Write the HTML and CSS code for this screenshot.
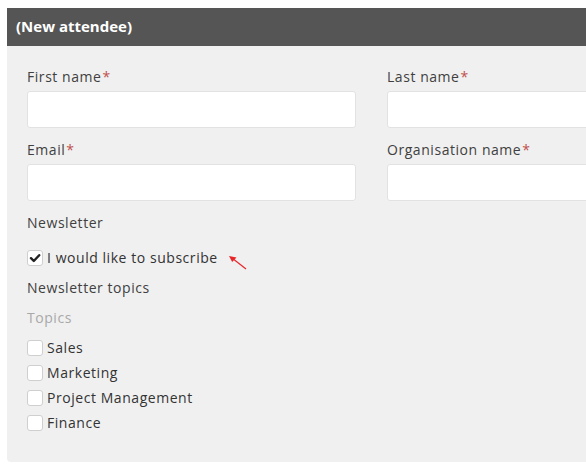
FILE: index.html
```html
<!DOCTYPE html>
<html>
<head>
<meta charset="utf-8">
<link rel="stylesheet" href="styles.css">
</head>
<body>
<div class="page">
  <div class="panel">
    <div class="panel-head">(New attendee)</div>
    <div class="panel-body">
      <div class="grid">
        <div class="field">
          <label class="label">First name<span class="req">*</span></label>
          <div class="input"></div>
        </div>
        <div class="field">
          <label class="label">Last name<span class="req">*</span></label>
          <div class="input"></div>
        </div>
        <div class="field">
          <label class="label">Email<span class="req">*</span></label>
          <div class="input"></div>
        </div>
        <div class="field">
          <label class="label">Organisation name<span class="req">*</span></label>
          <div class="input"></div>
        </div>
      </div>
      <div class="label newsletter">Newsletter</div>
      <div class="check-row subscribe">
        <span class="box checked"><svg viewBox="0 0 16 16" width="16" height="16"><path d="M4 8.2 L6.8 11 L12.2 5.2" fill="none" stroke="#222" stroke-width="2.4" stroke-linecap="round" stroke-linejoin="round"/></svg></span>
        <span class="check-text">I would like to subscribe</span>
        <svg class="arrow" viewBox="0 0 24 20" width="24" height="20"><line x1="19" y1="16" x2="5" y2="5" stroke="#e8262a" stroke-width="1.2"/><path d="M2 3 L9.5 4.6 L5.2 9 Z" fill="#e8262a"/></svg>
      </div>
      <div class="label topics-title">Newsletter topics</div>
      <div class="label muted">Topics</div>
      <div class="topic-list">
        <div class="check-row"><span class="box"></span><span class="check-text">Sales</span></div>
        <div class="check-row"><span class="box"></span><span class="check-text">Marketing</span></div>
        <div class="check-row"><span class="box"></span><span class="check-text">Project Management</span></div>
        <div class="check-row"><span class="box"></span><span class="check-text">Finance</span></div>
      </div>
    </div>
  </div>
</div>
</body>
</html>
```
FILE: styles.css
```css
html, body {
  margin: 0;
  padding: 0;
  background: #ffffff;
  overflow: hidden;
}
.page {
  padding: 8px 0 0 7px;
  width: 760px;
}
.panel {
  width: 740px;
  border-radius: 0 0 4px 4px;
  background: #f0f0f0;
}
.panel-head {
  height: 38px;
  line-height: 36px;
  background: #555555;
  color: #ffffff;
  font-family: "Open Sans", "Noto Sans", sans-serif;
  font-weight: 700;
  font-size: 15px;
  padding-left: 9px;
}
.panel-body {
  padding: 21px 20px 27px 20px;
  font-family: "Open Sans", "Noto Sans", sans-serif;
  font-size: 14px;
  letter-spacing: 0.55px;
  color: #333333;
}
.grid {
  display: grid;
  grid-template-columns: 329px 329px;
  column-gap: 31px;
}
.field {
  display: flex;
  flex-direction: column;
  margin-bottom: 12px;
}
.label {
  display: block;
  line-height: 20px;
  color: #404040;
}
.field .label {
  margin-bottom: 4px;
}
.req {
  color: #c0504d;
  margin-left: 1px;
}
.input {
  height: 35px;
  background: #ffffff;
  border: 1px solid #e2e2e2;
  border-radius: 3px;
}
.newsletter {
  margin-top: 0;
  margin-bottom: 12px;
}
.check-row {
  display: flex;
  align-items: center;
  height: 25px;
  gap: 4px;
}
.subscribe {
  position: relative;
}
.box {
  width: 14px;
  height: 14px;
  border: 1px solid #cfcfcf;
  border-radius: 3px;
  background: #ffffff;
  display: flex;
  align-items: center;
  justify-content: center;
  flex: none;
}
.box svg {
  display: block;
  flex: none;
}
.check-text {
  line-height: 20px;
}
.arrow {
  position: absolute;
  left: 200px;
  top: 8px;
}
.topics-title {
  margin-top: 8px;
}
.muted {
  margin-top: 10px;
  color: #a9a9a9;
}
.topic-list {
  margin-top: 7px;
}
```
